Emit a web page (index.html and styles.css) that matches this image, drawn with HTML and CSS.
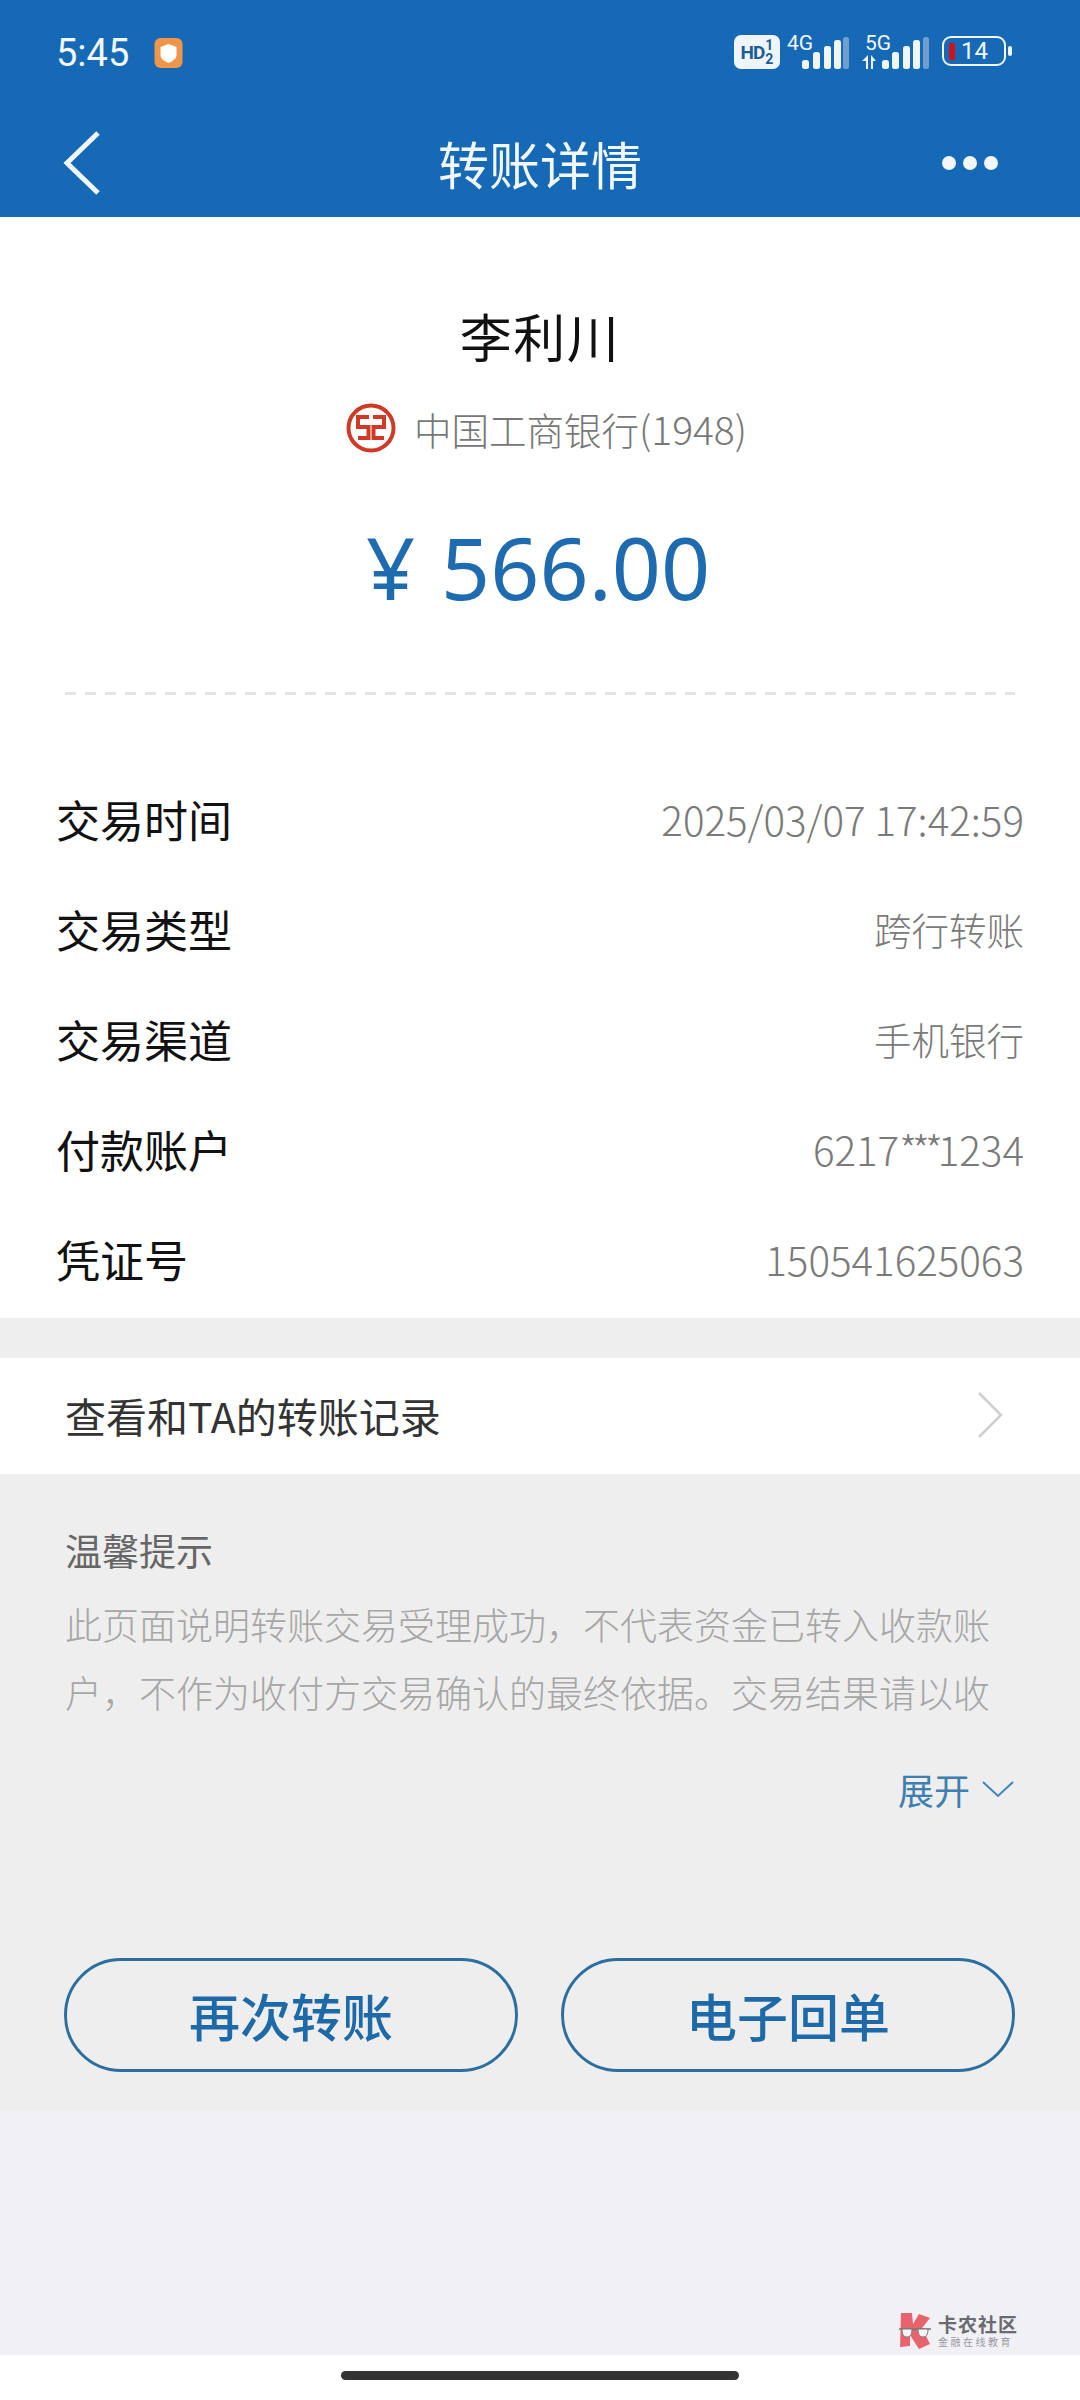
FILE: index.html
```html
<!DOCTYPE html>
<html lang="zh-CN">
<head>
<meta charset="utf-8">
<title>转账详情</title>
<link rel="stylesheet" href="styles.css">
</head>
<body>
<div class="page">
  <header class="head">
    <div class="status">
      <div class="status-left">
        <span class="clock">5:45</span>
        <svg class="shield" width="29" height="30" viewBox="0 0 28 30"><rect width="28" height="30" rx="6" fill="#f0964a"/><path d="M14 6l8 3v8c0 4-4 6-8 8-4-2-8-4-8-8V9z" fill="#fff"/></svg>
      </div>
      <div class="status-right">
        <div class="hd"><span class="hd-text">HD</span><span class="hd-sim"><span>1</span><span>2</span></span></div>
        <div class="sig">
          <span class="sig-label">4G</span>
          <svg class="bars" width="47" height="32" viewBox="0 0 47 32"><g fill="#eef5fb"><rect x="0" y="23" width="7" height="9" rx="2.500"/><rect x="11" y="15" width="7" height="17" rx="2.500"/><rect x="22" y="9" width="7" height="23" rx="2.500"/><rect x="32" y="3" width="7" height="29" rx="2.500"/></g><rect x="41" y="0" width="6" height="32" rx="2.500" fill="#6f9fcf"/></svg>
        </div>
        <div class="sig sig-five">
          <span class="sig-label">5G</span>
          <svg class="bars" width="67" height="32" viewBox="0 0 67 32"><g fill="#eef5fb"><path d="M6 18v14H4v-8H0zM9 18l5 6h-3v8H9z"/><rect x="20" y="23" width="7" height="9" rx="2.500"/><rect x="30" y="15" width="7" height="17" rx="2.500"/><rect x="41" y="9" width="7" height="23" rx="2.500"/><rect x="51" y="3" width="7" height="29" rx="2.500"/></g><rect x="61" y="0" width="6" height="32" rx="2.500" fill="#6f9fcf"/></svg>
        </div>
        <div class="batt-wrap">
          <div class="batt"><i class="batt-fill"></i><span class="batt-num">14</span></div>
          <i class="batt-cap"></i>
        </div>
      </div>
    </div>
    <nav class="nav">
      <svg class="back" width="42" height="66" viewBox="0 0 42 66"><path d="M38 3L7 33l31 30" fill="none" stroke="#f2f7fc" stroke-width="5"/></svg>
      <h1 class="nav-title">转账详情</h1>
      <div class="dots"><i></i><i></i><i></i></div>
    </nav>
  </header>

  <section class="summary">
    <div class="name">李利川</div>
    <div class="bank">
      <svg class="bank-logo" width="50" height="50" viewBox="0 0 50 50"><circle cx="25" cy="25" r="22.500" fill="none" stroke="#cf3a25" stroke-width="4"/><path d="M23 14H12v10h10.500v11H12M27 14h11v10H27.500v11H38" fill="none" stroke="#cf3a25" stroke-width="4"/></svg>
      <span class="bank-text">中国工商银行<span class="bank-num">(1948)</span></span>
    </div>
    <div class="amount"><span class="yen">¥</span><span>566.00</span></div>
    <div class="dash"></div>
  </section>

  <section class="rows">
    <div class="row"><span class="k">交易时间</span><span class="v num">2025/03/07 17:42:59</span></div>
    <div class="row"><span class="k">交易类型</span><span class="v">跨行转账</span></div>
    <div class="row"><span class="k">交易渠道</span><span class="v">手机银行</span></div>
    <div class="row"><span class="k">付款账户</span><span class="v num">6217<span class="stars">***</span>1234</span></div>
    <div class="row"><span class="k">凭证号</span><span class="v num">150541625063</span></div>
  </section>

  <div class="gap"></div>

  <div class="link">
    <span class="link-text">查看和TA的转账记录</span>
    <svg width="28" height="48" viewBox="0 0 28 48"><path d="M3 2l22 22L3 46" fill="none" stroke="#cfcfcf" stroke-width="2.500"/></svg>
  </div>

  <section class="tips">
    <div class="tips-title">温馨提示</div>
    <p class="tips-body">此页面说明转账交易受理成功，不代表资金已转入收款账户，不作为收付方交易确认的最终依据。交易结果请以收</p>
    <div class="more">
      <span>展开</span>
      <svg width="34" height="18" viewBox="0 0 34 18"><path d="M2 2l15 14L32 2" fill="none" stroke="#3f86bd" stroke-width="2"/></svg>
    </div>
    <div class="actions">
      <div class="btn">再次转账</div>
      <div class="btn">电子回单</div>
    </div>
  </section>

  <div class="filler">
    <div class="mark">
      <svg width="36" height="36" viewBox="0 0 36 36"><path d="M4 0h11l1 11L22 1l11 4-8 10 8 16-11 5-9-14v11l-10 1z" fill="#e8646c"/><path d="M2 16h32" stroke="#777" stroke-width="1.500"/><path d="M5 16h10c0 6-2 8-5 8s-5-2-5-8zM21 16h10c0 6-2 8-5 8s-5-2-5-8z" fill="#f6f6f8" stroke="#777" stroke-width="1"/></svg>
      <div class="mark-text">
        <span class="mark-a">卡农社区</span>
        <span class="mark-b">金融在线教育</span>
      </div>
    </div>
  </div>

  <div class="homebar"><i></i></div>
</div>
</body>
</html>
```
FILE: styles.css
```css
* { box-sizing: border-box; }
html, body { margin: 0; padding: 0; }
body { width: 1080px; height: 2400px; overflow: hidden; background: #fff; font-family: "Noto Sans", "Noto Sans CJK SC", sans-serif; }
.page { width: 1080px; height: 2400px; display: flex; flex-direction: column; }

.head { height: 217px; background: #1569b5; color: #f2f7fc; flex: none; }
.status { height: 104px; padding: 31px 68px 0 56px; display: flex; justify-content: space-between; align-items: flex-start; }
.status-left { display: flex; align-items: center; gap: 24px; height: 44px; }
.clock { font: 400 38px/44px "Roboto", sans-serif; }
.shield { margin-left: 1px; }
.status-right { display: flex; align-items: flex-start; gap: 6px; height: 36px; margin-top: 4px; }
.hd { width: 46px; height: 34px; background: #eef5fb; border-radius: 7px; color: #1d5c96; display: flex; align-items: center; justify-content: center; gap: 1px; font-family: "Roboto", sans-serif; font-weight: 700; }
.hd-text { font-size: 19px; line-height: 19px; letter-spacing: -1px; }
.hd-sim { display: flex; flex-direction: column; font-size: 14px; line-height: 14px; }
.sig { display: flex; position: relative; width: 63px; height: 34px; align-items: flex-end; justify-content: flex-end; }
.sig-five { width: 67px; margin-left: 7px; }
.sig-label { position: absolute; left: 1px; top: -2px; font: 400 21px/21px "Roboto", sans-serif; }
.sig-five .sig-label { left: 3px; }
.batt-wrap { display: flex; align-items: center; gap: 2px; margin-left: 7px; margin-top: 1px; }
.batt { width: 64px; height: 30px; border: 2.500px solid #f2f7fc; border-radius: 9px; display: flex; align-items: center; padding-left: 5px; gap: 6px; }
.batt-fill { width: 6px; height: 17px; background: #d0121b; border-radius: 1px; }
.batt-num { font: 400 24px/24px "Roboto", sans-serif; }
.batt-cap { width: 4px; height: 10px; background: #f2f7fc; border-radius: 2px; }

.nav { height: 113px; display: grid; grid-template-columns: 1fr auto 1fr; align-items: center; padding: 5px 82px 0 60px; }
.nav-title { margin: 0 0 0 22px; font: 400 51px/56px "Noto Sans CJK SC", sans-serif; }
.dots { display: flex; gap: 7px; justify-self: end; }
.dots i { width: 14px; height: 14px; border-radius: 50%; background: #f2f7fc; }

.summary { height: 537px; flex: none; display: flex; flex-direction: column; align-items: center; padding-top: 85px; }
.name { font: 400 52px/68px "Noto Sans CJK SC", sans-serif; color: #111; height: 68px; letter-spacing: 1.500px; }
.bank { display: flex; align-items: center; gap: 18px; margin-top: 32px; height: 52px; padding-left: 13px; }
.bank-text { font: 300 37.500px/52px "Noto Sans CJK SC", sans-serif; color: #777; }
.bank-num { font-size: 39px; }
.amount { margin-top: 63px; height: 100px; display: flex; gap: 26px; font: 400 86px/100px "Noto Sans", sans-serif; color: #1e6bb0; margin-left: -4px; }
.dash { margin-top: 75px; width: 950px; height: 3px; background: repeating-linear-gradient(90deg, #e4e4e4 0 11px, transparent 11px 20px); }

.rows { flex: none; height: 564px; padding: 10px 56px 0 56px; display: flex; flex-direction: column; }
.row { height: 110px; display: flex; justify-content: space-between; align-items: center; }
.k { font: 400 44px/60px "Noto Sans CJK SC", sans-serif; color: #111; }
.v { font: 300 37.500px/60px "Noto Sans CJK SC", sans-serif; color: #7a7a7a; }
.num { font-size: 40.300px; }
.stars { letter-spacing: -5px; }

.gap { height: 40px; flex: none; background: #eeeeee; }
.link { height: 116px; flex: none; background: #fff; display: flex; justify-content: space-between; align-items: center; padding: 0 76px 3px 65px; }
.link-text { font: 400 41px/60px "Noto Sans CJK SC", sans-serif; color: #333; }

.tips { height: 636px; flex: none; background: #eeeeee; padding: 50px 65px 0; display: flex; flex-direction: column; }
.tips-title { font: 400 37px/56px "Noto Sans CJK SC", sans-serif; color: #666; margin-top: -2px; }
.tips-body { margin: 12px 0 0; width: 940px; font: 300 37px/68px "Noto Sans CJK SC", sans-serif; color: #a6a6a6; }
.more { margin-top: 38px; display: flex; justify-content: flex-end; align-items: center; gap: 11px; font: 400 36px/50px "Noto Sans CJK SC", sans-serif; color: #3f7fb0; }
.actions { margin: 144px 0 0 -1px; display: flex; justify-content: space-between; }
.btn { width: 454px; height: 114px; border: 3px solid #2c6f9f; border-radius: 57px; color: #1e6aa8; display: flex; align-items: center; justify-content: center; font: 500 51px/60px "Noto Sans CJK SC", sans-serif; }

.filler { flex: 1; background: #f0f0f5; display: flex; justify-content: flex-end; align-items: flex-end; padding: 0 62px 6px 0; }
.mark { display: flex; align-items: center; gap: 5px; }
.mark-text { display: flex; flex-direction: column; }
.mark-a { font: 700 19px/22px "Noto Sans CJK SC", sans-serif; color: #6a6a72; letter-spacing: 1px; }
.mark-b { font: 400 10px/14px "Noto Sans CJK SC", sans-serif; color: #9a9aa2; letter-spacing: 2.500px; }

.homebar { height: 45px; flex: none; background: #fff; display: flex; justify-content: center; align-items: center; }
.homebar i { width: 398px; height: 9px; border-radius: 5px; background: #333; margin-top: -4px; }
```
